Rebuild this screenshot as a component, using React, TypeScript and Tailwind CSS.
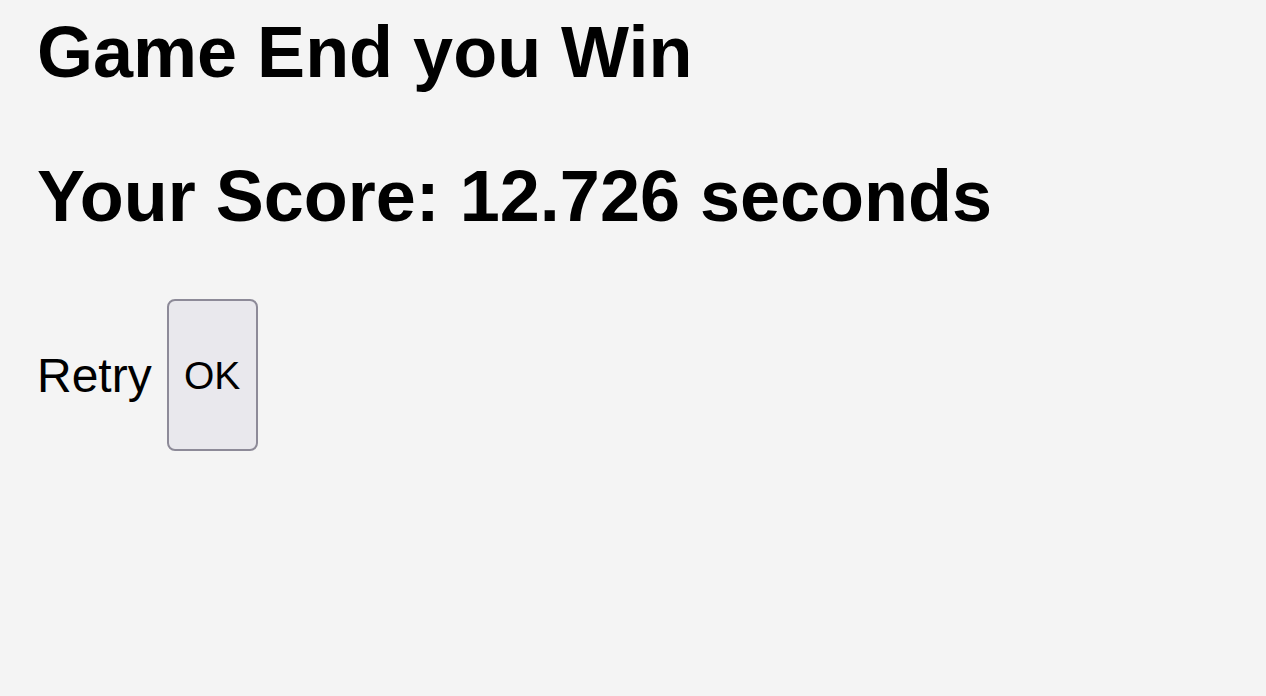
export default function App() {
  return (
    <div className="min-h-[696px] w-full bg-[#f4f4f4] text-black font-['Liberation_Sans',Arial,sans-serif]">
      <div className="flex flex-col gap-[61px] pl-[37px] pt-[11px]">
        <h1 className="text-[72px] font-bold leading-[83px]">Game End you Win</h1>
        <h2 className="text-[72px] font-bold leading-[83px]">Your Score: 12.726 seconds</h2>
        <div className="flex items-center gap-[15px]">
          <span className="text-[48px] leading-[55px]">Retry</span>
          <button className="h-[152px] w-[91px] rounded-[8px] border-2 border-[#8d8a98] bg-[#e9e8ed] text-[39px] leading-none">
            OK
          </button>
        </div>
      </div>
    </div>
  )
}
